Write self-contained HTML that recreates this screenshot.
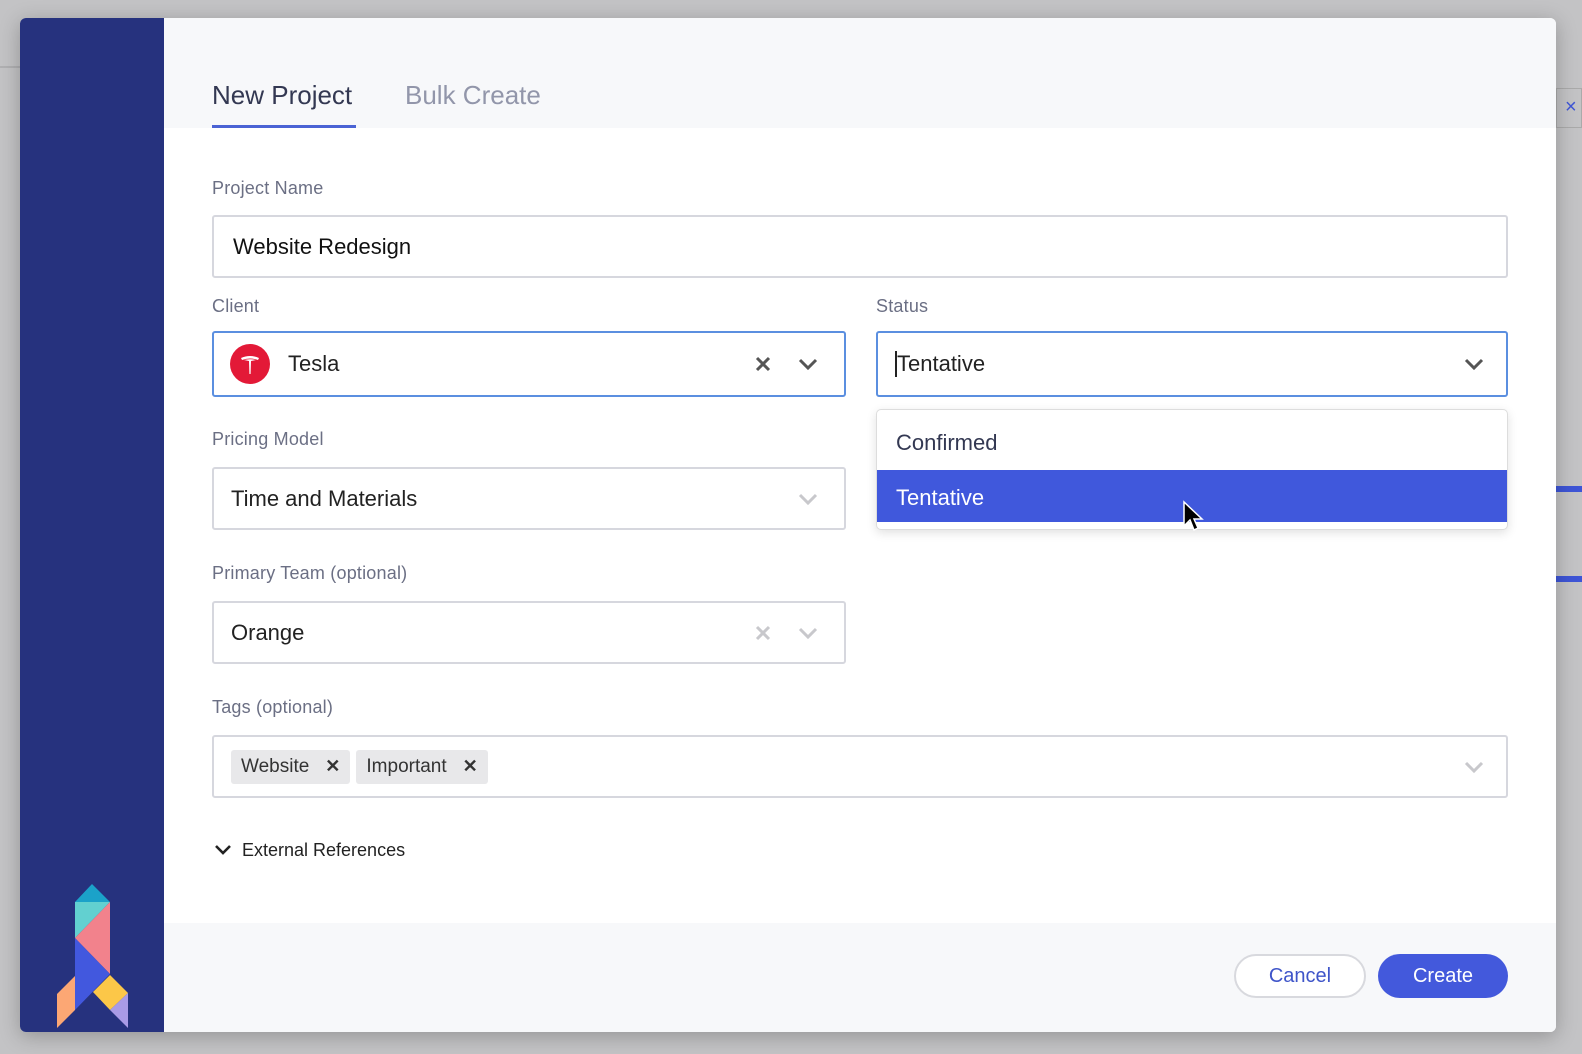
<!DOCTYPE html>
<html><head><meta charset="utf-8"><style>
*{box-sizing:border-box;margin:0;padding:0}
body{width:1582px;height:1054px;overflow:hidden;background:#c3c3c5;font-family:"Liberation Sans",sans-serif;position:relative}
.a{position:absolute}
.modal{left:20px;top:18px;width:1536px;height:1014px;background:#fff;border-radius:6px;overflow:hidden;box-shadow:0 4px 20px rgba(0,0,0,.25)}
.side{left:0;top:0;width:144px;height:1014px;background:#26327e}
.hdr{left:144px;top:0;right:0;height:110px;background:#f7f8fa}
.ftr{left:144px;top:905px;right:0;height:109px;background:#f7f8fa}
.lbl{font-size:18px;color:#6b6f84;letter-spacing:.2px}
.inp{border:2px solid #d6d7de;border-radius:3px;background:#fff;height:63px;font-size:22px;color:#222;display:flex;align-items:center;padding-left:17px}
.foc{border-color:#5b8fe0}
.chev{position:absolute;top:50%;margin-top:-8px}
.tag{background:#e8e8ea;border-radius:3px;height:34px;display:flex;align-items:center;font-size:19px;color:#333;padding:0 10px}
.tag b{margin-left:16px;font-size:18px}
</style></head><body>
<div class="a" style="left:0;top:66px;width:20px;height:2px;background:#b0b0b2"></div>
<div class="a" style="left:1556px;top:88px;width:26px;height:40px;border:1px solid #aaa;color:#3e55d6;font-size:20px;padding-left:8px;line-height:36px">×</div>
<div class="a" style="left:1556px;top:486px;width:26px;height:6px;background:#3e55d6"></div>
<div class="a" style="left:1556px;top:576px;width:26px;height:6px;background:#3e55d6"></div>
<div class="a modal">
 <div class="a side">
  <svg class="a" style="left:0;top:0" width="144" height="1014" viewBox="20 18 144 1014">
   <polygon points="75,902 110,902 92,884" fill="#1ba2c9"/>
   <polygon points="75,902 110,902 75,938" fill="#62d0d0"/>
   <polygon points="75,938 110,902 110,974" fill="#f2828c"/>
   <polygon points="75,938 110,974 75,1010" fill="#4258de"/>
   <polygon points="93,992 110,975 128,993 110,1010" fill="#fcc748"/>
   <polygon points="110,1010 128,993 128,1028" fill="#a99be6"/>
   <polygon points="75,976 57,994 57,1028 75,1010" fill="#fca774"/>
  </svg>
 </div>
 <div class="a hdr"></div>
 <div class="a ftr"></div>
</div>
<div class="a" style="left:212px;top:80px;font-size:26px;color:#333852">New Project</div>
<div class="a" style="left:212px;top:125px;width:144px;height:3px;background:#4b63d4"></div>
<div class="a" style="left:405px;top:80px;font-size:26px;color:#9296aa">Bulk Create</div>

<div class="a lbl" style="left:212px;top:178px">Project Name</div>
<div class="a inp" style="left:212px;top:215px;width:1296px;height:63px;padding-left:19px;color:#111">Website Redesign</div>

<div class="a lbl" style="left:212px;top:296px">Client</div>
<div class="a inp foc" style="left:212px;top:331px;width:634px;height:66px;padding-left:16px">
 <div style="width:40px;height:40px;border-radius:50%;background:#e31937;position:relative;margin-right:18px">
  <svg width="40" height="40" viewBox="0 0 40 40" style="position:absolute;left:0;top:0"><path d="M11 14 Q20 10 29 14 L28 16 Q24 14.5 20 14.5 Q16 14.5 12 16Z" fill="#fff"/><path d="M14 16 Q20 14.5 26 16 L21 17 L20.6 30 L19.4 30 L19 17Z" fill="#fff"/></svg>
 </div>Tesla
 <svg class="chev" style="left:540px;margin-top:-9px" width="18" height="18" viewBox="0 0 18 18"><path d="M3 3 L15 15 M15 3 L3 15" stroke="#555" stroke-width="3"/></svg>
 <svg class="chev" style="left:584px" width="20" height="16" viewBox="0 0 20 16"><path d="M2 4 L10 12 L18 4" stroke="#555" stroke-width="3" fill="none"/></svg>
</div>

<div class="a lbl" style="left:876px;top:296px">Status</div>
<div class="a inp foc" style="left:876px;top:331px;width:632px;height:66px;padding-left:17px"><span style="border-left:2px solid #222;height:26px;margin-right:0"></span>Tentative
 <svg class="chev" style="left:586px" width="20" height="16" viewBox="0 0 20 16"><path d="M2 4 L10 12 L18 4" stroke="#555" stroke-width="3" fill="none"/></svg>
</div>
<div class="a" style="left:876px;top:409px;width:632px;height:121px;background:#fff;border:1px solid #ddd;border-radius:5px;box-shadow:0 3px 10px rgba(0,0,0,.12);overflow:hidden">
 <div class="a" style="left:19px;top:20px;font-size:22px;color:#333852">Confirmed</div>
 <div class="a" style="left:0;top:60px;width:632px;height:52px;background:#4058dc;color:#fff;font-size:22px;padding:15px 19px">Tentative</div>
</div>
<svg class="a" style="left:1182px;top:500px" width="22" height="36" viewBox="0 0 22 36"><path d="M2 2 L2 26 L8 20 L12 30 L16 28 L12 19 L20 19Z" fill="#000" stroke="#fff" stroke-width="1.5"/></svg>

<div class="a lbl" style="left:212px;top:429px">Pricing Model</div>
<div class="a inp" style="left:212px;top:467px;width:634px;height:63px">Time and Materials
 <svg class="chev" style="left:584px" width="20" height="16" viewBox="0 0 20 16"><path d="M2 4 L10 12 L18 4" stroke="#c8c8cc" stroke-width="3" fill="none"/></svg>
</div>

<div class="a lbl" style="left:212px;top:563px">Primary Team (optional)</div>
<div class="a inp" style="left:212px;top:601px;width:634px;height:63px">Orange
 <svg class="chev" style="left:540px;margin-top:-9px" width="18" height="18" viewBox="0 0 18 18"><path d="M3 3 L15 15 M15 3 L3 15" stroke="#c8c8cc" stroke-width="3"/></svg>
 <svg class="chev" style="left:584px" width="20" height="16" viewBox="0 0 20 16"><path d="M2 4 L10 12 L18 4" stroke="#c8c8cc" stroke-width="3" fill="none"/></svg>
</div>

<div class="a lbl" style="left:212px;top:697px">Tags (optional)</div>
<div class="a inp" style="left:212px;top:735px;width:1296px;height:63px;padding-left:17px">
 <div class="tag">Website<b>✕</b></div><div class="tag" style="margin-left:6px">Important<b>✕</b></div>
 <svg class="chev" style="left:1250px" width="20" height="16" viewBox="0 0 20 16"><path d="M2 4 L10 12 L18 4" stroke="#c8c8cc" stroke-width="3" fill="none"/></svg>
</div>

<svg class="a" style="left:214px;top:843px" width="18" height="14" viewBox="0 0 18 14"><path d="M2 3 L9 10 L16 3" stroke="#222" stroke-width="2.6" fill="none"/></svg>
<div class="a" style="left:242px;top:840px;font-size:18px;color:#222">External References</div>

<div class="a" style="left:1234px;top:954px;width:132px;height:44px;border:2px solid #d8d9de;border-radius:22px;background:#fff;color:#3f55c9;font-size:20px;text-align:center;line-height:40px">Cancel</div>
<div class="a" style="left:1378px;top:954px;width:130px;height:44px;border-radius:22px;background:#4359dc;color:#fff;font-size:20px;text-align:center;line-height:44px">Create</div>
</body></html>
